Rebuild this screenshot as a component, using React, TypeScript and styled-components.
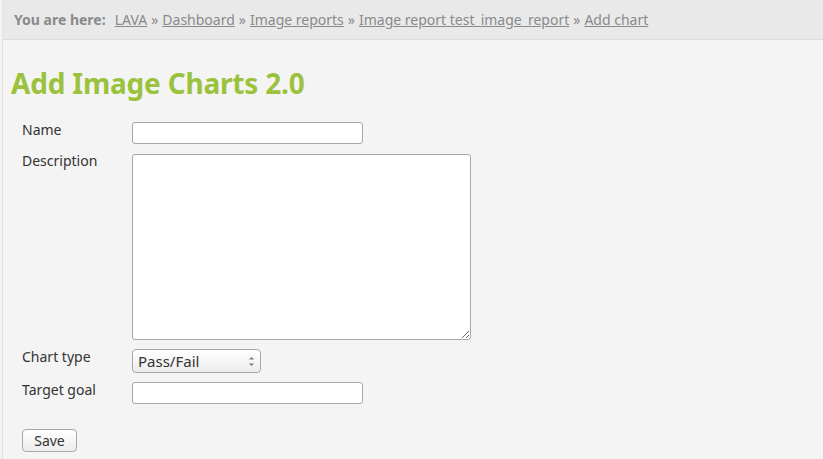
import React, { useState } from 'react';
import styled, { createGlobalStyle } from 'styled-components';

const GlobalStyle = createGlobalStyle`
  html, body {
    margin: 0;
    padding: 0;
    background: #f4f4f4;
  }
  body {
    font-family: "Noto Sans", "Open Sans", "DejaVu Sans", sans-serif;
    color: #333;
  }
`;

const Page = styled.div`
  margin-left: 2px;
  min-height: 459px;
  border-left: 1px solid #e2e2e2;
  box-sizing: border-box;
`;

const Breadcrumb = styled.div`
  height: 39px;
  background: #e9e9e9;
  border-bottom: 1px solid #dcdcdc;
  display: flex;
  align-items: center;
  padding-left: 11px;
  font-size: 14px;
  color: #8a8a8a;
  white-space: nowrap;
`;

const Here = styled.strong`
  font-weight: bold;
  margin-right: 9px;
`;

const Crumb = styled.a`
  color: #8a8a8a;
  text-decoration: underline;
`;

const Sep = styled.span`
  margin: 0 4px;
`;

const Title = styled.h1`
  margin: 26px 0 0 8px;
  font-size: 28px;
  line-height: 34px;
  font-weight: bold;
  color: #9bc23c;
  letter-spacing: -0.2px;
`;

const Form = styled.form`
  margin-top: 22px;
  padding-left: 19px;
  display: grid;
  grid-template-columns: 110px auto;
  row-gap: 9px;
  align-items: start;
  justify-items: start;
`;

const Label = styled.label`
  font-size: 14px;
  line-height: 18px;
  margin-top: -1px;
  color: #333;
`;

const TextInput = styled.input`
  width: 231px;
  height: 22px;
  box-sizing: border-box;
  border: 1px solid #a8a8a8;
  border-radius: 3px;
  background: #fff;
  padding: 2px 4px;
  font: inherit;
  font-size: 13px;
`;

const TextArea = styled.textarea`
  width: 339px;
  height: 186px;
  margin-top: 1px;
  box-sizing: border-box;
  border: 1px solid #a8a8a8;
  border-radius: 3px;
  background: #fff;
  padding: 3px;
  font: inherit;
  font-size: 13px;
`;

const SelectWrap = styled.div`
  position: relative;
  width: 129px;
  height: 24px;
`;

const Select = styled.select`
  appearance: none;
  width: 100%;
  height: 100%;
  box-sizing: border-box;
  border: 1px solid #a8a8a8;
  border-radius: 4px;
  background: linear-gradient(#ffffff, #ececec);
  padding: 0 20px 0 5px;
  font: inherit;
  font-size: 15px;
  color: #333;
`;

const Arrows = styled.svg`
  position: absolute;
  right: 6px;
  top: 7px;
  pointer-events: none;
`;

const SaveButton = styled.button`
  grid-column: 1 / span 2;
  margin-top: 16px;
  height: 23px;
  width: 55px;
  padding: 0;
  border: 1px solid #a8a8a8;
  border-radius: 4px;
  background: linear-gradient(#ffffff, #ececec);
  font: inherit;
  font-size: 14px;
  color: #333;
`;

const App: React.FC = () => {
  const [chartType, setChartType] = useState('pass/fail');

  return (
    <>
      <GlobalStyle />
      <Page>
        <Breadcrumb>
          <Here>You are here:</Here>
          <Crumb href="#">LAVA</Crumb>
          <Sep>»</Sep>
          <Crumb href="#">Dashboard</Crumb>
          <Sep>»</Sep>
          <Crumb href="#">Image reports</Crumb>
          <Sep>»</Sep>
          <Crumb href="#">Image report test_image_report</Crumb>
          <Sep>»</Sep>
          <Crumb href="#">Add chart</Crumb>
        </Breadcrumb>

        <Title>Add Image Charts 2.0</Title>

        <Form onSubmit={(e) => e.preventDefault()}>
          <Label htmlFor="name">Name</Label>
          <TextInput id="name" type="text" />

          <Label htmlFor="description">Description</Label>
          <TextArea id="description" />

          <Label htmlFor="chart_type">Chart type</Label>
          <SelectWrap>
            <Select
              id="chart_type"
              value={chartType}
              onChange={(e) => setChartType(e.target.value)}
            >
              <option value="pass/fail">Pass/Fail</option>
              <option value="measurement">Measurement</option>
              <option value="attributes">Attributes</option>
            </Select>
            <Arrows width="7" height="11" viewBox="0 0 7 11">
              <path d="M3.5 1 L6 3.5 L1 3.5 Z" fill="#777" />
              <path d="M3.5 10 L6 7.5 L1 7.5 Z" fill="#777" />
            </Arrows>
          </SelectWrap>

          <Label htmlFor="target_goal">Target goal</Label>
          <TextInput id="target_goal" type="text" />

          <SaveButton type="submit">Save</SaveButton>
        </Form>
      </Page>
    </>
  );
};

export default App;
